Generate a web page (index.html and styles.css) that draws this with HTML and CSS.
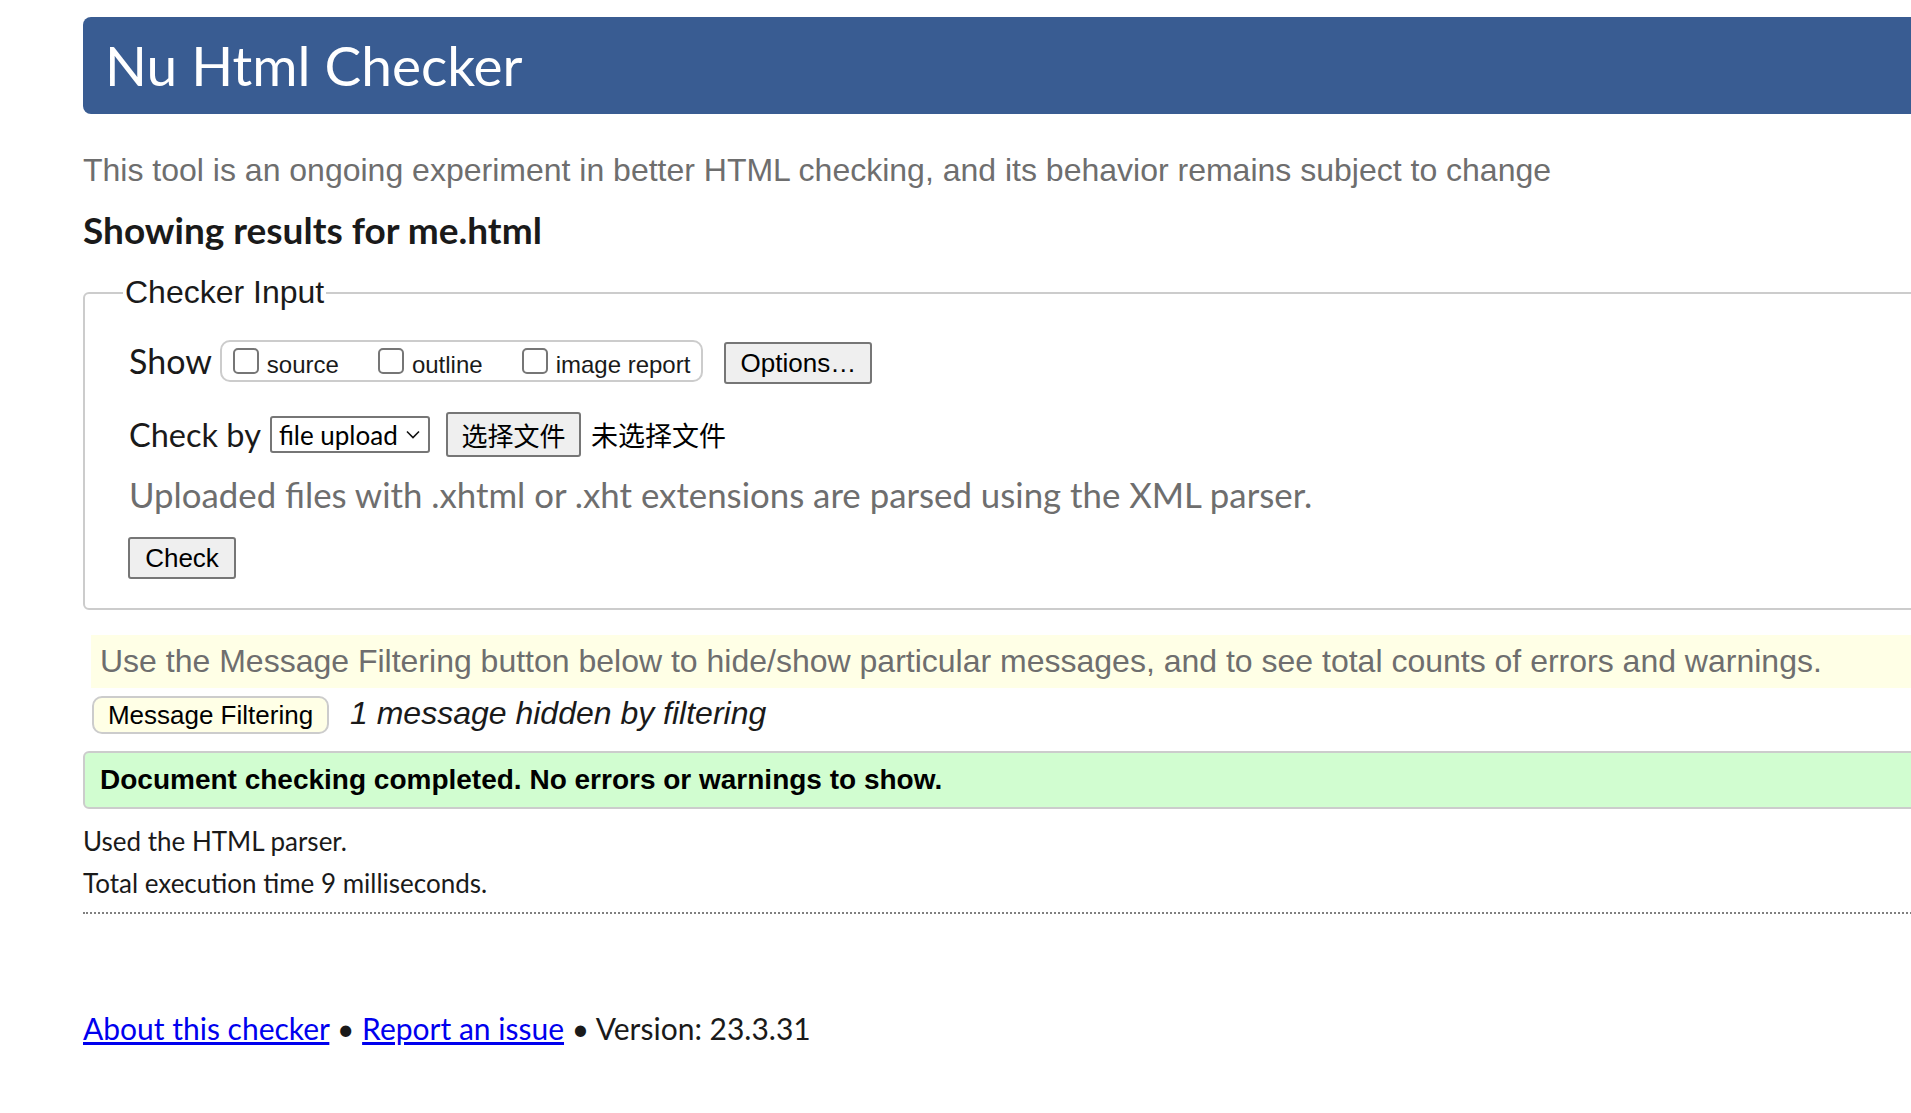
FILE: index.html
```html
<!DOCTYPE html>
<html lang="en">
<head>
<meta charset="utf-8">
<title>Showing results for me.html - Nu Html Checker</title>
<link rel="stylesheet" href="styles.css">
</head>
<body>
<div class="page">
  <header class="masthead"><h1 class="title">Nu Html Checker</h1></header>
  <p class="intro">This tool is an ongoing experiment in better HTML checking, and its behavior remains subject to change</p>
  <h2 class="results-title">Showing results for me.html</h2>
  <fieldset class="checker">
    <legend class="checker-legend">Checker Input</legend>
    <div class="row row-show">
      <span class="row-label">Show</span>
      <div class="show-group">
        <label class="opt"><input class="cb" type="checkbox"><span>source</span></label>
        <label class="opt"><input class="cb" type="checkbox"><span>outline</span></label>
        <label class="opt"><input class="cb" type="checkbox"><span>image report</span></label>
      </div>
      <button class="btn btn-options" type="button">Options…</button>
    </div>
    <div class="row row-checkby">
      <span class="row-label row-label-sm">Check by</span>
      <span class="select">file upload<svg class="chev" width="14" height="9" viewBox="0 0 14 9"><path d="M1 1.5 L7 7.5 L13 1.5" fill="none" stroke="#111" stroke-width="1.6"/></svg></span>
      <button class="btn btn-file" type="button">选择文件</button>
      <span class="nofile">未选择文件</span>
    </div>
    <p class="upload-note">Uploaded files with .xhtml or .xht extensions are parsed using the XML parser.</p>
    <button class="btn btn-check" type="button">Check</button>
  </fieldset>
  <p class="filter-hint">Use the Message Filtering button below to hide/show particular messages, and to see total counts of errors and warnings.</p>
  <div class="filter-row">
    <button class="btn-filter" type="button">Message Filtering</button>
    <span class="hidden-count">1 message hidden by filtering</span>
  </div>
  <p class="success">Document checking completed. No errors or warnings to show.</p>
  <p class="meta">Used the HTML parser.</p>
  <p class="meta">Total execution time 9 milliseconds.</p>
  <hr class="sep">
  <p class="footer"><a href="#">About this checker</a> • <a href="#">Report an issue</a> • Version: 23.3.31</p>
</div>
</body>
</html>
```
FILE: styles.css
```css
html, body {
  margin: 0;
  padding: 0;
  overflow: hidden;
  background: #fff;
}
body {
  font-family: Lato, "Open Sans", sans-serif;
  color: #1a1a1a;
}
.page {
  width: 2200px;
  padding: 17px 0 0 83px;
}
.masthead {
  height: 97px;
  background: #395c92;
  border-radius: 8px 0 0 8px;
  display: flex;
  align-items: center;
  padding-left: 22px;
}
.title {
  margin: 0;
  font-family: Lato, sans-serif;
  font-weight: 400;
  font-size: 55px;
  color: #fff;
  line-height: 1;
}
.intro {
  margin: 36px 0 0;
  font-family: "Liberation Sans", Arial, sans-serif;
  font-size: 32px;
  line-height: 40px;
  color: #6e6e6e;
}
.results-title {
  margin: 20px 0 0;
  font-family: Lato, sans-serif;
  font-weight: 700;
  font-size: 37px;
  line-height: 40px;
  color: #1a1a1a;
}
.checker {
  margin: 24px 0 0;
  border: 2px solid #cccccc;
  border-radius: 6px;
  padding: 0 0 29px 44px;
  min-width: 0;
}
.checker-legend {
  font-family: "Liberation Sans", Arial, sans-serif;
  font-size: 32px;
  color: #1a1a1a;
  padding: 0 2px;
  margin-left: -6px;
}
.row {
  display: flex;
  align-items: center;
}
.row-show {
  margin-top: 29px;
  height: 42px;
  align-items: flex-start;
}
.row-label {
  font-family: Lato, sans-serif;
  font-size: 34px;
  color: #1a1a1a;
}
.row-label-sm {
  font-size: 32.5px;
}
.row-show .row-label {
  line-height: 42px;
}
.show-group {
  margin-left: 8px;
  height: 42px;
  box-sizing: border-box;
  border: 2px solid #cccccc;
  border-radius: 10px;
  display: flex;
  align-items: center;
  padding: 0 11px 0 11px;
  gap: 39px;
}
.opt {
  display: flex;
  align-items: flex-end;
  font-family: "Liberation Sans", Arial, sans-serif;
  font-size: 24px;
  color: #1a1a1a;
  line-height: 1;
}
.opt span {
  margin-left: 8px;
  position: relative;
  top: 3px;
}
.cb {
  appearance: none;
  -webkit-appearance: none;
  margin: 0;
  width: 26px;
  height: 26px;
  box-sizing: border-box;
  border: 2px solid #767676;
  border-radius: 5px;
  background: #fff;
}
.btn {
  font-family: "Liberation Sans", Arial, sans-serif;
  font-size: 26px;
  color: #000;
  background: #efefef;
  border: 2px solid #767676;
  border-radius: 3px;
  box-sizing: border-box;
  padding: 0;
  line-height: 1;
}
.btn-options {
  margin-left: 21px;
  margin-top: 2px;
  width: 148px;
  height: 42px;
}
.row-checkby {
  margin-top: 30px;
  height: 45px;
}
.select {
  margin-left: 9px;
  width: 160px;
  height: 37px;
  box-sizing: border-box;
  border: 2px solid #767676;
  border-radius: 3px;
  display: flex;
  align-items: center;
  justify-content: space-between;
  padding: 0 8px 0 7px;
  font-family: Lato, sans-serif;
  font-size: 26px;
  color: #000;
}
.chev {
  display: block;
}
.btn-file {
  margin-left: 16px;
  width: 135px;
  height: 45px;
  font-family: "Noto Sans CJK SC", sans-serif;
  font-size: 26px;
}
.nofile {
  margin-left: 10px;
  font-family: "Noto Sans CJK SC", sans-serif;
  font-size: 27px;
  color: #000;
}
.upload-note {
  margin: 18px 0 0;
  font-family: Lato, sans-serif;
  font-size: 34.8px;
  line-height: 40px;
  color: #6e6e6e;
}
.btn-check {
  display: block;
  margin-top: 22px;
  margin-left: -1px;
  width: 108px;
  height: 42px;
}
.filter-hint {
  margin: 25px 0 0 8px;
  height: 53px;
  line-height: 53px;
  padding-left: 9px;
  background: #ffffe6;
  font-family: "Liberation Sans", Arial, sans-serif;
  font-size: 32px;
  color: #6e6e6e;
  white-space: nowrap;
}
.filter-row {
  margin: 7px 0 0 9px;
  display: flex;
  align-items: baseline;
}
.btn-filter {
  width: 237px;
  height: 38px;
  box-sizing: border-box;
  border: 2px solid #cccccc;
  border-radius: 10px;
  background: #ffffe6;
  font-family: "Liberation Sans", Arial, sans-serif;
  font-size: 26px;
  color: #000;
  padding: 0;
  line-height: 1;
}
.hidden-count {
  margin-left: 21px;
  font-family: "Liberation Sans", Arial, sans-serif;
  font-style: italic;
  font-size: 32px;
  color: #1a1a1a;
}
.success {
  margin: 17px 0 0;
  height: 58px;
  box-sizing: border-box;
  border: 2px solid #cccccc;
  border-radius: 6px;
  background: #d1fdd0;
  padding-left: 15px;
  line-height: 54px;
  font-family: "Liberation Sans", Arial, sans-serif;
  font-weight: 700;
  font-size: 28px;
  color: #000;
}
.meta {
  margin: 0;
  font-family: Lato, sans-serif;
  font-size: 26px;
  line-height: 42px;
  color: #1a1a1a;
}
.success + .meta {
  margin-top: 11px;
}
.sep {
  margin: 8px 0 0;
  border: 0;
  border-top: 2px dotted #808080;
  height: 0;
}
.footer {
  margin: 94px 0 0;
  font-family: Lato, sans-serif;
  font-size: 30px;
  line-height: 40px;
  color: #1a1a1a;
}
.footer a {
  color: #0000ee;
}
```
